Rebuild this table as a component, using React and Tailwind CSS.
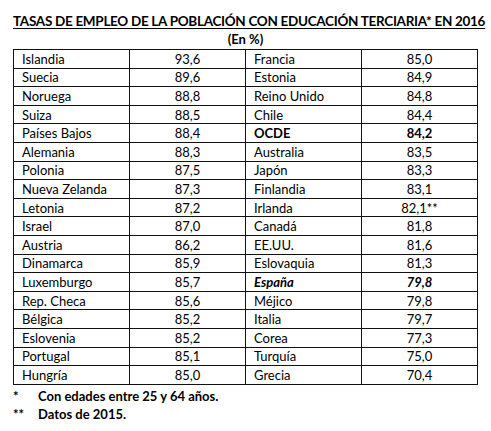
const rows = [
  ['Islandia', '93,6', 'Francia', '85,0'],
  ['Suecia', '89,6', 'Estonia', '84,9'],
  ['Noruega', '88,8', 'Reino Unido', '84,8'],
  ['Suiza', '88,5', 'Chile', '84,4'],
  ['Países Bajos', '88,4', 'OCDE', '84,2', 'bold'],
  ['Alemania', '88,3', 'Australia', '83,5'],
  ['Polonia', '87,5', 'Japón', '83,3'],
  ['Nueva Zelanda', '87,3', 'Finlandia', '83,1'],
  ['Letonia', '87,2', 'Irlanda', '82,1**'],
  ['Israel', '87,0', 'Canadá', '81,8'],
  ['Austria', '86,2', 'EE.UU.', '81,6'],
  ['Dinamarca', '85,9', 'Eslovaquia', '81,3'],
  ['Luxemburgo', '85,7', 'España', '79,8', 'italic'],
  ['Rep. Checa', '85,6', 'Méjico', '79,8'],
  ['Bélgica', '85,2', 'Italia', '79,7'],
  ['Eslovenia', '85,2', 'Corea', '77,3'],
  ['Portugal', '85,1', 'Turquía', '75,0'],
  ['Hungría', '85,0', 'Grecia', '70,4'],
];

export default function App() {
  return (
    <div className="w-[491px] h-[431px] bg-white text-black pt-[13px] px-[13px] font-['Lato','Open_Sans',sans-serif]">
      <h1 className="text-center whitespace-nowrap font-bold text-[13.5px] leading-[17px] underline underline-offset-2 tracking-[-0.3px]">
        TASAS DE EMPLEO DE LA POBLACIÓN CON EDUCACIÓN TERCIARIA* EN 2016
      </h1>
      <p className="text-center font-bold text-[13px] leading-[17px] mt-[1px] mb-[1px]">(En %)</p>
      <table className="w-[465px] border-collapse table-fixed text-[13px]">
        <tbody>
          {rows.map((r) => {
            const special = r[4] === 'bold' ? 'font-bold' : r[4] === 'italic' ? 'font-bold italic' : '';
            return (
              <tr key={r[0]}>
                <td className="border border-[#111] px-[8px] py-0 h-[18.6px] leading-[16px] w-[116px]">{r[0]}</td>
                <td className="border border-[#111] py-0 h-[18.6px] leading-[16px] text-center w-[116px]">{r[1]}</td>
                <td className={`border border-[#111] px-[8px] py-0 h-[18.6px] leading-[16px] w-[116px] ${special}`}>{r[2]}</td>
                <td className={`border border-[#111] py-0 h-[18.6px] leading-[16px] text-center w-[116px] ${special}`}>{r[3]}</td>
              </tr>
            );
          })}
        </tbody>
      </table>
      <div className="mt-[2px] font-bold text-[13px] leading-[18px]">
        <div className="flex">
          <span className="w-[25px]">*</span>
          <span>Con edades entre 25 y 64 años.</span>
        </div>
        <div className="flex">
          <span className="w-[25px]">**</span>
          <span>Datos de 2015.</span>
        </div>
      </div>
    </div>
  );
}
